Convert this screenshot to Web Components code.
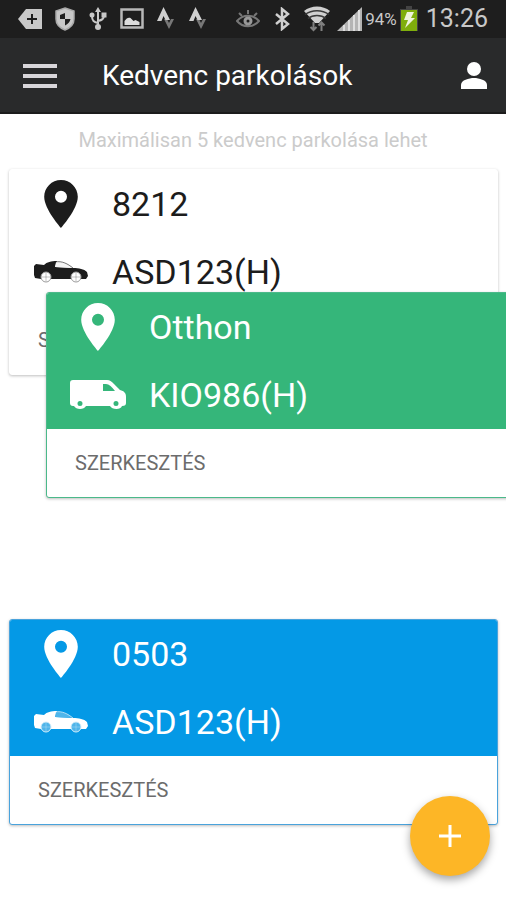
<!DOCTYPE html>
<html lang="hu">
<head>
<meta charset="utf-8">
<meta name="viewport" content="width=device-width, initial-scale=1">
<title>Kedvenc parkolások</title>
<style>
html, body { height: 100%; }
body { margin: 0; background: #fff; font-family: Roboto, "Noto Sans", sans-serif; }
</style>
</head>
<body>
<favorites-page>
  <status-bar slot="status"></status-bar>
  <app-header slot="header">Kedvenc parkolások</app-header>
  <span slot="hint">Maximálisan 5 kedvenc parkolása lehet</span>
  <parking-card class="plain" vehicle="car"><span slot="place">8212</span><span slot="plate">ASD123(H)</span></parking-card>
  <drag-slot><parking-card class="green" vehicle="van"><span slot="place">Otthon</span><span slot="plate">KIO986(H)</span></parking-card></drag-slot>
  <parking-card class="blue" vehicle="car"><span slot="place">0503</span><span slot="plate">ASD123(H)</span></parking-card>
  <add-button slot="action"></add-button>
</favorites-page>

<script>
function define(name, html, setup) {
  customElements.define(name, class extends HTMLElement {
    constructor() {
      super();
      this.attachShadow({ mode: 'open' }).innerHTML = html;
    }
    connectedCallback() {
      if (setup) setup(this);
    }
  });
}

const CHEVRONS = '<svg width="20" height="24" viewBox="0 0 20 24"><path d="M8 12h3l2 4 2-4h3l-5 10z" fill="#777"/><path d="M1 14L7.500 0 14 13h-4.500l-2-4-2 5z" fill="#d0d0d0"/></svg>';

define('status-bar', `
<style>
:host { display: flex; align-items: center; justify-content: space-between; height: 38px; box-sizing: border-box; padding: 0 18px; background: #1e1e1e; color: #c8c8c8; }
.group { display: flex; align-items: center; }
.left { gap: 12px; }
.right { gap: 7px; }
.spaced { display: flex; align-items: center; gap: 14px; }
.battery { display: flex; align-items: center; gap: 2px; font-size: 17px; line-height: 20px; }
.time { font-size: 25px; line-height: 38px; }
svg { display: block; flex: none; }
</style>
<div class="group left">
  <svg width="24" height="22" viewBox="0 0 24 22"><path d="M8 1h16v20H8L0 11z" fill="#c8c8c8"/><path d="M14 6v10M9 11h10" stroke="#1e1e1e" stroke-width="2"/></svg>
  <svg width="22" height="24" viewBox="0 0 22 24"><path d="M11 1l9 3v8c0 5-4 9-9 11-5-2-9-6-9-11V4z" fill="#c8c8c8" stroke="#aaa" stroke-width="1.500"/><path d="M11 6v6H6V8zM11 12h5.500c-.5 3-2.500 5-5.500 6.500z" fill="#1e1e1e"/></svg>
  <svg width="20" height="24" viewBox="0 0 20 24" fill="none" stroke="#c8c8c8" stroke-width="2"><path d="M10 3v18M10 16c-4-1-6-2-6-7M10 14c4-1 6-2 6-6"/><path d="M10 0l3 5H7z" fill="#c8c8c8" stroke="none"/><circle cx="4" cy="8" r="2.500" fill="#c8c8c8" stroke="none"/><path d="M13.500 5.500h5v5h-5z" fill="#c8c8c8" stroke="none"/><circle cx="10" cy="20" r="3" fill="#c8c8c8" stroke="none"/></svg>
  <svg width="24" height="22" viewBox="0 0 24 22"><path d="M1.500 1.500h21v18h-21z" fill="none" stroke="#b8b8b8" stroke-width="2.500"/><path d="M4.500 17v-4c2-3 4-4 6-3l3 3 2-1 4 2v3z" fill="#dcdcdc"/></svg>
  ${CHEVRONS}
  ${CHEVRONS}
</div>
<div class="group right">
  <div class="spaced">
  <svg width="24" height="22" viewBox="0 0 24 22" fill="none" stroke="#777" stroke-width="2"><path d="M1 13c6-7 16-7 22 0-6 7-16 7-22 0z"/><circle cx="12" cy="13" r="3" stroke="#999" stroke-width="3"/><path d="M3 5l3 3M12 2v4M21 5l-3 3"/></svg>
  <svg width="16" height="24" viewBox="0 0 16 24" fill="none" stroke="#d0d0d0" stroke-width="2.500"><path d="M2 7l12 10-6 5V2l6 5L2 17"/></svg>
  <svg width="26" height="26" viewBox="0 0 26 26"><path d="M0 5C7-1 19-1 26 5L15 17h-4z" fill="#d0d0d0"/><path d="M1 8.500c7-5 17-5 24 0M4 12.500c5-4 13-4 18 0" fill="none" stroke="#3a3a3a" stroke-width="1.500"/><path d="M9.500 16v8M6.500 21l3 3 3-3M17.500 25v-8M14.500 19.500l3-3 3 3" fill="none" stroke="#808080" stroke-width="2"/></svg>
  </div>
  <div class="battery">
    <svg width="26" height="26" viewBox="0 0 26 26"><path d="M0 25L25 1v24z" fill="#b4b4b4"/><path d="M7 19v6M12 14v11M17 9v16M22 4v21" stroke="#dedede" stroke-width="2"/></svg>
    <span>94%</span>
    <svg width="20" height="26" viewBox="0 0 20 26"><path d="M7 0h6v3h6v22H1V3h6z" fill="#444"/><path d="M2 4h16v21H2z" fill="#7fae0c"/><path d="M8 6h7l-3 6h4L6 22l3-8H5z" fill="#eef3dc"/></svg>
  </div>
  <span class="time">13:26</span>
</div>`);

define('app-header', `
<style>
:host { display: flex; align-items: center; height: 76px; box-sizing: border-box; padding: 2px 12px 0 20px; background: #292a2b; border-bottom: 2px solid #1c1c1c; color: #fff; }
button { display: grid; place-items: center; width: 40px; height: 40px; padding: 0; border: 0; background: none; flex: none; }
h1 { flex: 1; margin: 0 0 0 42px; font-size: 28px; line-height: 40px; font-weight: 400; white-space: nowrap; }
svg { display: block; }
</style>
<button type="button" aria-label="Menü"><svg width="34" height="24" viewBox="0 0 34 24" fill="#d8d6da"><path d="M0 0h34v4H0zM0 10h34v4H0zM0 20h34v4H0z"/></svg></button>
<h1><slot></slot></h1>
<button type="button" aria-label="Profil"><svg width="26" height="28" viewBox="0 0 26 28" fill="#fff"><circle cx="13" cy="7" r="7"/><path d="M0 27v-4c0-5 8-7 13-7s13 2 13 7v4z"/></svg></button>`);

const PIN = '<svg width="34" height="48" viewBox="5 2 14 20"><path fill="currentColor" d="M12 2C8.130 2 5 5.130 5 9c0 5.250 7 13 7 13s7-7.750 7-13c0-3.870-3.130-7-7-7zm0 9.500a2.500 2.500 0 0 1 0-5 2.500 2.500 0 0 1 0 5z"/></svg>';
const CAR = '<svg width="56" height="22" viewBox="0 0 56 22"><path fill="currentColor" d="M1 5l2-2 8 1C14 1 18 0 24 0l-2 6 18 1c6 0 11 1 14 4l1 4-2 3H8l-6-1-1-3z"/><path d="M23 1c7-1.500 12 2 17 6l-18-1z" fill="var(--glass)"/><path d="M22 1c7-1.500 13 2 18 6" fill="none" stroke="currentColor" stroke-opacity=".6"/><g fill="var(--wheel)" stroke="var(--rim)"><circle cx="13" cy="16" r="5"/><circle cx="43" cy="16" r="5"/></g><g fill="none" stroke="currentColor" stroke-opacity=".25"><path d="M13 12v8M9 16h8M43 12v8M39 16h8"/></g></svg>';
const VAN = '<svg width="56" height="30" viewBox="0 0 56 30"><path fill="currentColor" fill-rule="evenodd" d="M3 0h34c3 0 5 2 7 4l6 6c4 1 6 3 6 7v6c0 2-1 3-4 3-1 4-10 4-12 0H16c-2 4-10 4-12 0H3c-2 0-3-1-3-3V3c0-2 1-3 3-3zM33 4v7h12c-3-4-6-7-9-7zM10 21a2.500 2.500 0 1 0 0 5 2.500 2.500 0 0 0 0-5zM46 21a2.500 2.500 0 1 0 0 5 2.500 2.500 0 0 0 0-5z"/></svg>';

define('parking-card', `
<style>
:host { display: block; box-sizing: border-box; height: 206px; --card: #fff; --wheel: #fff; --rim: #999; --glass: #f4f4f4; --line: #fff; color: #1c1c1c; border: 1px solid var(--line); border-radius: 3px; background: #fff; box-shadow: 0 1px 3px rgba(0,0,0,.26); overflow: hidden; }
:host(.green) { --card: #35b67a; --line: #4bb98a; color: #fff; }
:host(.blue) { --card: #0499e6; --wheel: #4fb5ea; --rim: #d5edfa; --glass: #4fb5ea; --line: #4aa3dc; color: #fff; }
.info { background: var(--card); }
.row { display: grid; grid-template-columns: 56px 1fr; column-gap: 23px; align-items: center; height: 68px; padding-left: 23px; font-size: 34px; line-height: 40px; }
.icon { display: grid; place-items: center; }
svg { display: block; }
button { display: block; height: 68px; padding: 0 28px; border: 0; background: none; color: #6c6c6c; font: 400 20px/24px Roboto, "Noto Sans", sans-serif; }
</style>
<div class="info">
  <div class="row"><span class="icon">${PIN}</span><slot name="place"></slot></div>
  <div class="row"><span class="icon vehicle"></span><slot name="plate"></slot></div>
</div>
<button type="button">SZERKESZTÉS</button>`,
el => { el.shadowRoot.querySelector('.vehicle').innerHTML = el.getAttribute('vehicle') === 'van' ? VAN : CAR; });

/* Empty place in the list; the card being dragged floats above its neighbours. */
define('drag-slot', `
<style>
:host { display: block; position: relative; height: 206px; }
.lifted { position: absolute; top: -102px; left: 37px; width: 100%; }
</style>
<div class="lifted"><slot></slot></div>`);

define('add-button', `
<style>
:host { position: absolute; right: 16px; bottom: 24px; }
button { display: grid; place-items: center; width: 80px; height: 80px; padding: 0; border: 0; border-radius: 50%; background: #fdb626; box-shadow: 0 4px 8px rgba(0,0,0,.35); }
svg { display: block; }
</style>
<button type="button" aria-label="Hozzáadás"><svg width="22" height="22" viewBox="0 0 22 22"><path d="M11 0v22M0 11h22" stroke="#fff" stroke-width="3"/></svg></button>`);

define('favorites-page', `
<style>
:host { display: block; position: relative; min-height: 100%; overflow: hidden; }
p { margin: 0; padding: 14px 8px 17px; text-align: center; font-size: 20px; line-height: 24px; color: #cbcbcb; }
.list { display: flex; flex-direction: column; gap: 19px; padding: 0 8px 0 9px; }
</style>
<slot name="status"></slot>
<slot name="header"></slot>
<main>
  <p><slot name="hint"></slot></p>
  <div class="list"><slot></slot></div>
</main>
<slot name="action"></slot>`);
</script>
</body>
</html>
